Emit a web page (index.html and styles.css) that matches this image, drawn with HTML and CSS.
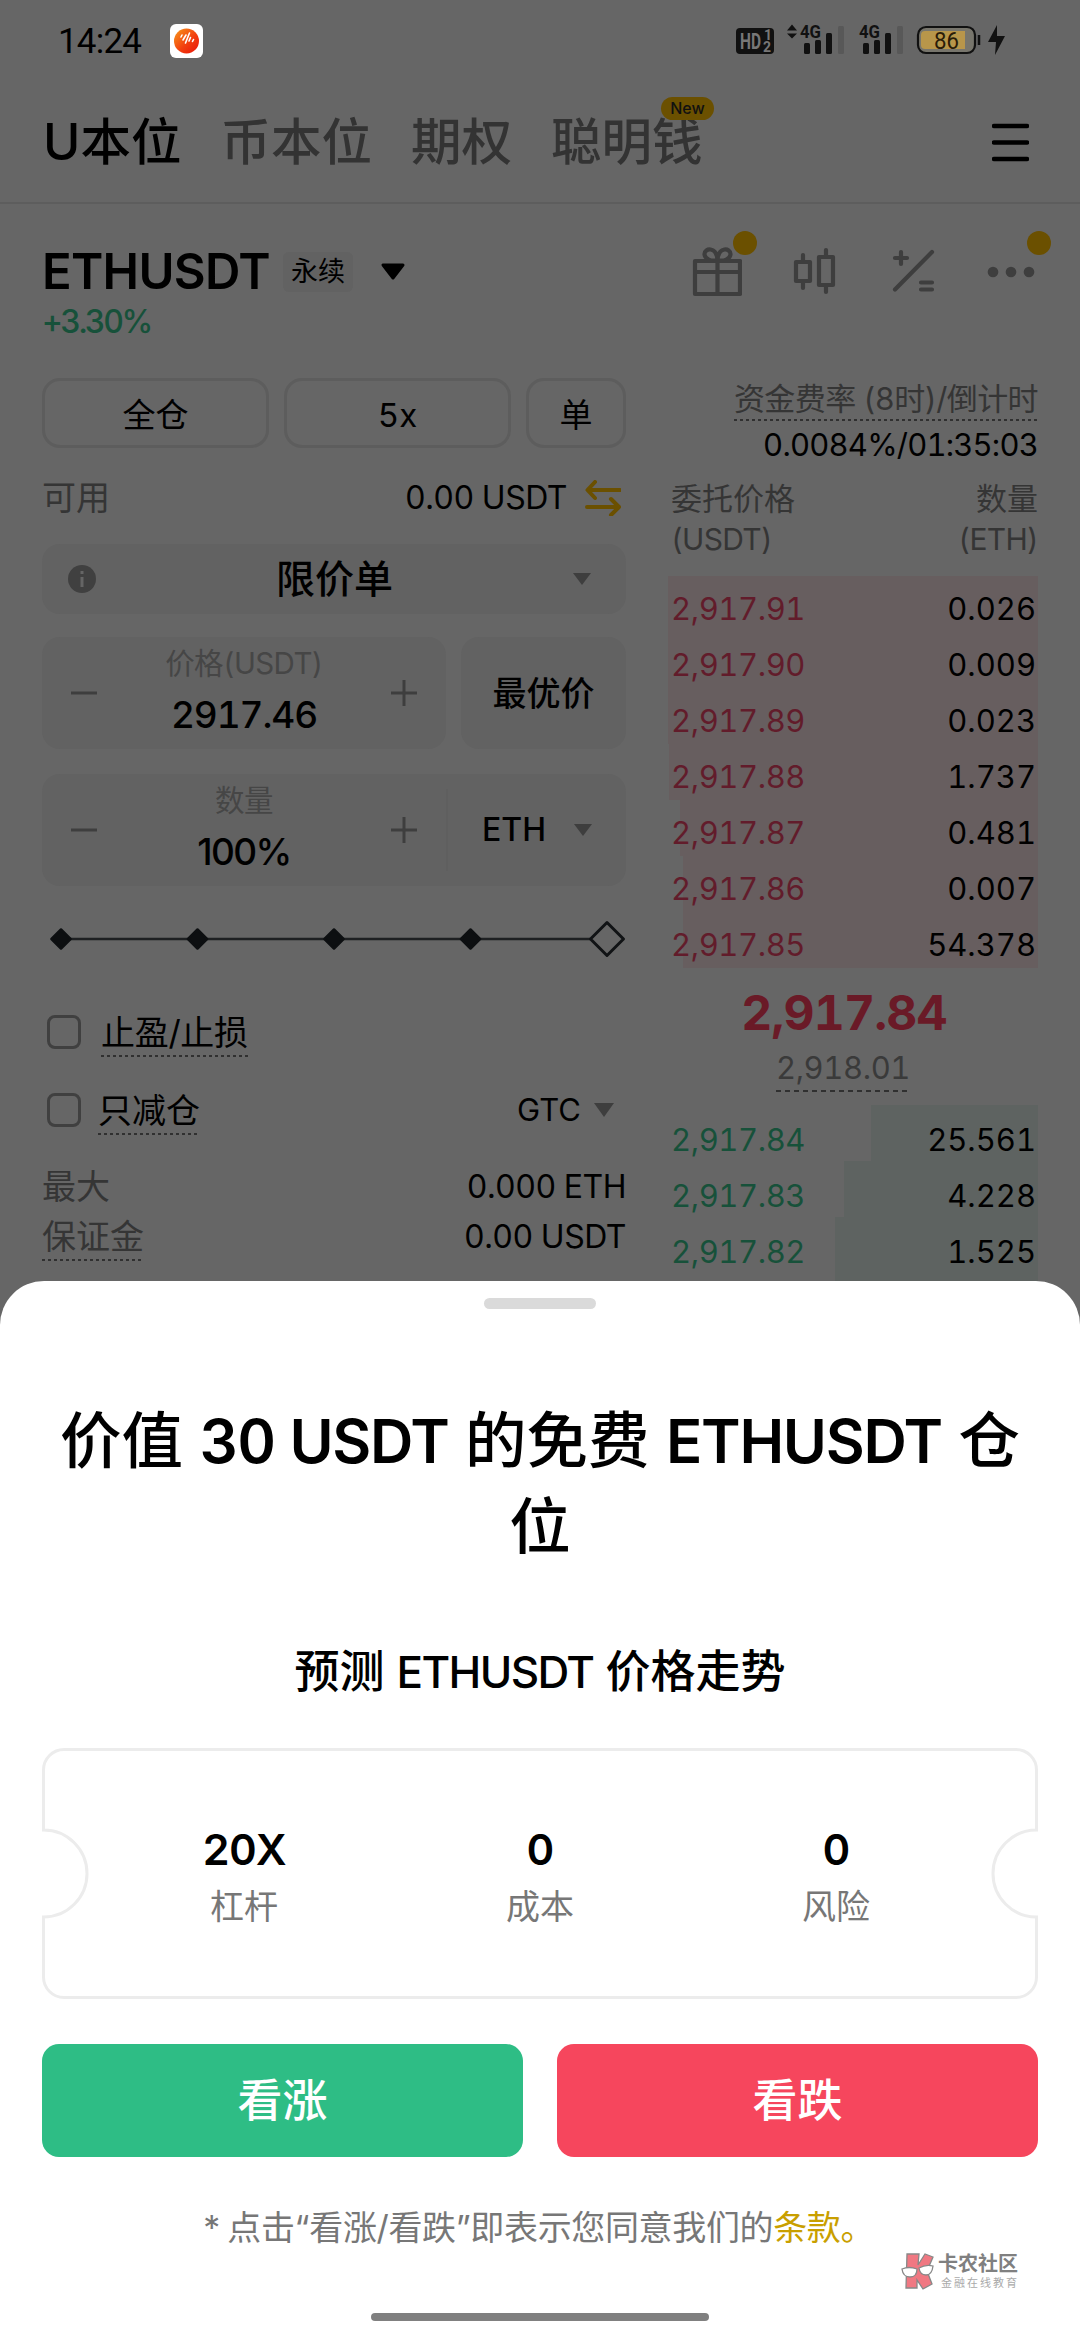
FILE: index.html
```html
<!DOCTYPE html>
<html lang="zh-CN">
<head>
    <meta charset="UTF-8">
    <meta name="viewport" content="width=device-width, initial-scale=1.0">
    <title>ETHUSDT 永续</title>
    <link rel="stylesheet" href="styles.css">
</head>
<body>
    <header class="status">
        <span class="time">14:24</span>
        <svg class="app-icon" width="33" height="34" viewBox="0 0 33 34">
            <defs>
                <linearGradient id="ball" x1="0" y1="0" x2="1" y2="1">
                    <stop offset="0" stop-color="#f79a1c"/>
                    <stop offset="0.55" stop-color="#f2400f"/>
                    <stop offset="1" stop-color="#e81208"/>
                </linearGradient>
            </defs>
            <rect width="33" height="34" rx="6" fill="#fff"/>
            <circle cx="16.5" cy="17" r="12.5" fill="url(#ball)"/>
            <path d="M11 13l1-2M13 16l3-5M15.500 19l4-10M19 17l1.500-3.500M22.500 17.500l1-2" stroke="#fff" stroke-width="1.600" stroke-linecap="round"/>
        </svg>
        <svg class="status-icons" width="272" height="36" viewBox="0 0 272 36">
            <rect x="1" y="7" width="38" height="26" rx="4" fill="#111"/>
            <text x="5" y="28" class="hd" textLength="21" lengthAdjust="spacingAndGlyphs">HD</text>
            <text x="29" y="19" class="hd-sub">1</text>
            <text x="28" y="31" class="hd-sub">2</text>
            <path d="M52 9.500l5-6 5 6zM52 12.500l5 5 5-5z" fill="#111"/>
            <text x="65" y="17" class="net" textLength="21" lengthAdjust="spacingAndGlyphs">4G</text>
            <rect x="69" y="22" width="6" height="11" rx="1.500" fill="#111"/>
            <rect x="80" y="19" width="6" height="14" rx="1.500" fill="#111"/>
            <rect x="91" y="12" width="6" height="21" rx="1.500" fill="#111"/>
            <rect x="103" y="5" width="6" height="28" rx="1.500" fill="#585858"/>
            <text x="124" y="17" class="net" textLength="21" lengthAdjust="spacingAndGlyphs">4G</text>
            <rect x="128" y="22" width="6" height="11" rx="1.500" fill="#111"/>
            <rect x="139" y="19" width="6" height="14" rx="1.500" fill="#111"/>
            <rect x="150" y="12" width="6" height="21" rx="1.500" fill="#111"/>
            <rect x="162" y="5" width="6" height="28" rx="1.500" fill="#585858"/>
            <rect x="183" y="6" width="57" height="26" rx="8" fill="#77756c" stroke="#111" stroke-width="2.200"/>
            <path d="M190 10h40v18h-40a4 4 0 0 1-4-4v-10a4 4 0 0 1 4-4z" fill="#b8964a"/>
            <path d="M244 14v10" stroke="#111" stroke-width="2.500"/>
            <text x="199" y="28" class="battery" textLength="25" lengthAdjust="spacingAndGlyphs">86</text>
            <path d="M262 4l-9 17h8l-1 13 10-19h-8z" fill="#111"/>
        </svg>
    </header>

    <nav class="tabs">
        <a class="tab active">U本位</a>
        <a class="tab">币本位</a>
        <a class="tab">期权</a>
        <a class="tab">聪明钱<span class="new">New</span></a>
        <svg class="menu" width="37" height="40" viewBox="0 0 37 40">
            <path d="M2 4h33M2 20.500h33M2 37h33" stroke="#000" stroke-width="4.500" stroke-linecap="round"/>
        </svg>
    </nav>

    <section class="symbol">
        <div class="symbol-left">
            <div class="symbol-name">
                <h1>ETHUSDT</h1>
                <span class="tag">永续</span>
                <svg width="26" height="18" viewBox="0 0 26 18"><path d="M3 2h20L13 15z" stroke="#000" stroke-width="3" stroke-linejoin="round"/></svg>
            </div>
            <div class="change">+3.30%</div>
        </div>
        <div class="tools">
            <div class="tool has-dot">
                <svg width="50" height="52" viewBox="0 0 50 52">
                    <path d="M3 15h45v33H3zM3 26h45M25.500 15v33M25.500 14c-6 2-13-1-13-6 0-6 12-8 13 6zM25.500 14c6 2 13-1 13-6 0-6-12-8-13 6z"/>
                </svg>
            </div>
            <div class="tool">
                <svg width="50" height="52" viewBox="0 0 50 52">
                    <path d="M6 16h14v19H6zM13 9v7M13 35v7M29 11h14v28H29zM36 4v7M36 39v7"/>
                </svg>
            </div>
            <div class="tool">
                <svg width="50" height="52" viewBox="0 0 50 52">
                    <path d="M7 12h12M13 6v12M44 6L7 43.500M33 36.500h11M33 43.500h11"/>
                </svg>
            </div>
            <div class="tool has-dot">
                <svg width="50" height="52" viewBox="0 0 50 52">
                    <g class="dots"><circle cx="7" cy="26" r="5.300"/><circle cx="25" cy="26" r="5.300"/><circle cx="43" cy="26" r="5.300"/></g>
                </svg>
            </div>
        </div>
    </section>

    <main class="trade">
        <section class="order">
            <div class="modes">
                <button class="mode">全仓</button>
                <button class="mode">5x</button>
                <button class="mode small">单</button>
            </div>
            <div class="row available">
                <span class="muted">可用</span>
                <span class="amount">0.00 USDT
                    <svg width="36" height="36" viewBox="0 0 36 36"><path d="M35 10H3M10 2L2.500 10l7.500 8M2 27h32M26 19l8 8-8 8"/></svg>
                </span>
            </div>
            <div class="box select">
                <svg width="28" height="28" viewBox="0 0 28 28"><circle cx="14" cy="14" r="14" fill="#404040"/><path d="M14 12v10M14 6v3" stroke="#656565" stroke-width="3"/></svg>
                <span>限价单</span>
                <i class="caret"></i>
            </div>
            <div class="inputs">
                <div class="box stepper">
                    <svg class="step" width="28" height="28" viewBox="0 0 28 28"><path d="M1 14h26"/></svg>
                    <div class="field"><label>价格(USDT)</label><b>2917.46</b></div>
                    <svg class="step" width="28" height="28" viewBox="0 0 28 28"><path d="M1 14h26M14 1v26"/></svg>
                </div>
                <div class="box best">最优价</div>
            </div>
            <div class="box quantity">
                <div class="stepper">
                    <svg class="step" width="28" height="28" viewBox="0 0 28 28"><path d="M1 14h26"/></svg>
                    <div class="field"><label>数量</label><b class="percent">100%</b></div>
                    <svg class="step" width="28" height="28" viewBox="0 0 28 28"><path d="M1 14h26M14 1v26"/></svg>
                </div>
                <div class="unit">ETH <i class="caret"></i></div>
            </div>
            <svg class="slider" width="584" height="40" viewBox="0 0 584 40">
                <path d="M19 20h529" stroke="#1e2022" stroke-width="2.500"/>
                <path d="M19 10.500l9.500 9.500-9.500 9.500L9.500 20zM155.500 10.500l9.500 9.500-9.500 9.500-9.500-9.500zM292 10.500l9.500 9.500-9.500 9.500-9.500-9.500zM428.500 10.500l9.500 9.500-9.500 9.500-9.500-9.500z" fill="#0d0f11" stroke="#0d0f11" stroke-width="2.500" stroke-linejoin="round"/>
                <path d="M565 3.500L581.500 20 565 36.500 548.500 20z" fill="#666" stroke="#111315" stroke-width="3" stroke-linejoin="round"/>
            </svg>
            <div class="check"><i class="tick"></i><span class="hint tpsl">止盈/止损</span></div>
            <div class="check reduce"><i class="tick"></i><span class="hint">只减仓</span><span class="tif">GTC <i class="caret big"></i></span></div>
            <div class="row max"><span class="muted">最大</span><span>0.000 ETH</span></div>
            <div class="row margin"><span class="hint muted">保证金</span><span>0.00 USDT</span></div>
        </section>

        <section class="book">
            <div class="funding"><span class="hint muted">资金费率 (8时)/倒计时</span></div>
            <div class="rate">0.0084%/01:35:03</div>
            <div class="book-head">
                <div>委托价格<br><span class="unit-name">(USDT)</span></div>
                <div>数量<br><span class="unit-name">(ETH)</span></div>
            </div>
            <ul class="asks">
                <li style="--depth: 370px"><span>2,917.91</span><span>0.026</span></li>
                <li style="--depth: 370px"><span>2,917.90</span><span>0.009</span></li>
                <li style="--depth: 370px"><span>2,917.89</span><span>0.023</span></li>
                <li style="--depth: 369px"><span>2,917.88</span><span>1.737</span></li>
                <li style="--depth: 358px"><span>2,917.87</span><span>0.481</span></li>
                <li style="--depth: 355px"><span>2,917.86</span><span>0.007</span></li>
                <li style="--depth: 355px"><span>2,917.85</span><span>54.378</span></li>
            </ul>
            <div class="last">2,917.84</div>
            <div class="mark"><span>2,918.01</span></div>
            <ul class="bids">
                <li style="--depth: 167px"><span>2,917.84</span><span>25.561</span></li>
                <li style="--depth: 194px"><span>2,917.83</span><span>4.228</span></li>
                <li style="--depth: 203px"><span>2,917.82</span><span>1.525</span></li>
                <li style="--depth: 203px"></li>
            </ul>
        </section>
    </main>

    <section class="sheet">
        <div class="handle"></div>
        <h2>价值 <span>30 USDT</span> 的免费 <span>ETHUSDT</span> 仓位</h2>
        <h3>预测 <span>ETHUSDT</span> 价格走势</h3>
        <div class="ticket">
            <svg class="ticket-edge" width="996" height="251" viewBox="0 0 996 251">
                <path d="M22 1.500h952a20.500 20.500 0 0 1 20.500 20.500v60a43.500 43.500 0 0 0 0 87v60a20.500 20.500 0 0 1-20.500 20.500H22A20.500 20.500 0 0 1 1.500 229v-60a43.500 43.500 0 0 0 0-87V22A20.500 20.500 0 0 1 22 1.500z" fill="#fff" stroke="#ececec" stroke-width="3"/>
            </svg>
            <div class="stat"><b>20X</b><span>杠杆</span></div>
            <div class="stat"><b>0</b><span>成本</span></div>
            <div class="stat"><b>0</b><span>风险</span></div>
        </div>
        <div class="actions">
            <button class="up">看涨</button>
            <button class="down">看跌</button>
        </div>
        <p class="terms">* 点击“看涨/看跌”即表示您同意我们的<a>条款。</a></p>
        <div class="home-bar"></div>
    </section>

    <div class="watermark">
        <svg width="36" height="38" viewBox="0 0 36 38">
            <path d="M7 2h12l-1 11 7-11 8 3-6 14 5 13-9 5-6-9v8H6z" fill="#f07882" stroke="#888" stroke-width="1.300"/>
            <path d="M2 17q7-3 15 0 0 8-7 8-7 0-8-8zM19 16q7-4 14-2-1 9-7 9-6 0-7-7z" fill="#fff" stroke="#888" stroke-width="1.300"/>
        </svg>
        <div class="watermark-text"><b>卡农社区</b><span>金融在线教育</span></div>
    </div>
</body>
</html>
```
FILE: styles.css
```css
* {
    box-sizing: border-box;
}
body {
    margin: 0;
    width: 1080px;
    height: 2340px;
    position: relative;
    overflow: hidden;
    background-color: #666;
    color: #000;
    font-family: Inter, "Noto Sans CJK SC", sans-serif;
    font-size: 32px;
    line-height: 40px;
    font-variant-numeric: tabular-nums;
    white-space: nowrap;
}
h1, h2, h3, p, ul {
    margin: 0;
    padding: 0;
    list-style: none;
}
button {
    padding: 0;
    border: 0;
    background: none;
    color: inherit;
    font: inherit;
}
svg {
    display: block;
    flex: none;
}

/* status bar */
.status {
    height: 80px;
    padding: 22px 0 0 58px;
    display: flex;
    align-items: flex-start;
}
.time {
    width: 112px;
    font: 400 35px/40px Roboto, sans-serif;
    letter-spacing: -0.8px;
}
.app-icon {
    margin-top: 2px;
}
.status-icons {
    margin: -1px 0 0 532px;
    overflow: visible;
    font-family: Roboto, sans-serif;
}
.hd {
    font-size: 22px;
    font-weight: 700;
    fill: #777;
}
.hd-sub {
    font-size: 14px;
    font-weight: 700;
    fill: #777;
}
.net {
    font-size: 19px;
    font-weight: 700;
    fill: #111;
}
.battery {
    font-size: 24px;
    font-weight: 400;
    fill: #2a1c08;
}

/* market tabs */
.tabs {
    height: 124px;
    padding: 2px 51px 0 43px;
    border-bottom: 2px solid #5d5d5d;
    display: flex;
    align-items: center;
    gap: 39px;
    font-size: 50.500px;
    font-weight: 500;
}
.tab {
    position: relative;
    color: #333;
}
.tab.active {
    color: #000;
}
.new {
    position: absolute;
    left: 110px;
    top: -25px;
    width: 53px;
    height: 23px;
    border-radius: 12px;
    background-color: #6b5000;
    color: #111;
    font-size: 16px;
    line-height: 23px;
    text-align: center;
}
.menu {
    margin-left: auto;
}

/* symbol header */
.symbol {
    height: 162px;
    padding: 42px 44px 0 42px;
    display: flex;
    justify-content: space-between;
}
.symbol-name {
    height: 52px;
    display: flex;
    align-items: center;
}
h1 {
    width: 241px;
    font-size: 49px;
    font-weight: 600;
    letter-spacing: -0.7px;
}
.tag {
    width: 70px;
    margin-right: 27px;
    border-radius: 6px;
    background-color: #626262;
    font-size: 27px;
    text-align: center;
}
.change {
    margin-top: 4px;
    color: #17513a;
    font-weight: 500;
    letter-spacing: -2.4px;
}
.tools {
    display: flex;
    gap: 48px;
}
.tool {
    position: relative;
}
.tool path {
    fill: none;
    stroke: #3e3e3e;
    stroke-width: 4.200;
    stroke-linecap: round;
    stroke-linejoin: round;
}
.dots {
    fill: #3e3e3e;
}
.has-dot::after {
    content: "";
    position: absolute;
    top: -15px;
    right: -15px;
    width: 24px;
    height: 24px;
    border-radius: 50%;
    background-color: #6b5000;
}

/* trade area */
.trade {
    padding: 0 42px;
    display: flex;
    justify-content: space-between;
}
.order {
    width: 584px;
    padding-top: 12px;
}
.modes {
    height: 70px;
    display: flex;
    gap: 15px;
}
.mode {
    flex: 1;
    padding-top: 3px;
    border: 3px solid #5d5d5d;
    border-radius: 18px;
    font-size: 33px;
}
.mode.small {
    flex: none;
    width: 100px;
}
.row {
    height: 40px;
    display: flex;
    justify-content: space-between;
    letter-spacing: -0.5px;
}
.muted {
    color: #353535;
    font-size: 34px;
    letter-spacing: 0;
}
.available {
    margin-top: 30px;
}
.amount {
    display: flex;
    gap: 18px;
    align-items: center;
    padding-right: 5px;
}
.amount path {
    fill: none;
    stroke: #6b5000;
    stroke-width: 4;
    stroke-linecap: round;
    stroke-linejoin: round;
}
.box {
    border-radius: 18px;
    background-color: #626262;
}
.select {
    height: 70px;
    margin-top: 26px;
    padding: 0 35px 0 26px;
    display: flex;
    align-items: center;
    justify-content: space-between;
    font-size: 39px;
    font-weight: 500;
}
.caret {
    width: 18px;
    height: 12px;
    background-color: #3e3e3e;
    clip-path: polygon(0 0, 100% 0, 50% 100%);
}
.caret.big {
    width: 20px;
    height: 14px;
}
.inputs {
    height: 112px;
    margin-top: 23px;
    display: flex;
    gap: 15px;
}
.stepper {
    width: 404px;
    height: 112px;
    padding: 0 28px;
    display: flex;
    align-items: center;
    justify-content: space-between;
}
.step {
    stroke: #3e3e3e;
    stroke-width: 3;
}
.field {
    display: flex;
    flex-direction: column;
    align-items: center;
}
.field label {
    height: 48px;
    color: #464646;
    font-size: 29.500px;
    line-height: 38px;
    letter-spacing: -0.6px;
}
.field b {
    height: 50px;
    font-size: 37px;
    font-weight: 500;
    line-height: 45px;
    letter-spacing: -1.1px;
}
.field .percent {
    font-variant-numeric: normal;
    letter-spacing: -1.600px;
}
.best {
    flex: 1;
    font-size: 34px;
    font-weight: 500;
    line-height: 114px;
    text-align: center;
}
.quantity {
    height: 112px;
    margin-top: 25px;
    display: flex;
    align-items: center;
}
.unit {
    flex: 1;
    height: 82px;
    padding: 0 34px 0 34px;
    border-left: 2px solid #5f5f5f;
    display: flex;
    align-items: center;
    justify-content: space-between;
    font-weight: 500;
}
.slider {
    margin-top: 33px;
}
.check {
    height: 50px;
    margin-top: 48px;
    padding-left: 5px;
    display: flex;
    align-items: center;
    font-size: 34px;
}
.check.reduce {
    margin-top: 28px;
}
.tick {
    width: 34px;
    height: 34px;
    margin-right: 17px;
    border: 3px solid #404040;
    border-radius: 8px;
}
.hint {
    display: inline-block;
    height: 50px;
    line-height: 51px;
    background: repeating-linear-gradient(to right, #303030 0 3px, transparent 3px 6px) left bottom / 100% 2px no-repeat;
}
.tpsl {
    margin-left: 3px;
    letter-spacing: -0.3px;
}
.tif {
    margin-left: auto;
    padding-right: 12px;
    display: flex;
    align-items: center;
    gap: 13px;
    font-size: 31px;
    line-height: 50px;
}
.max {
    margin-top: 31px;
    line-height: 42px;
}
.margin {
    height: 50px;
    margin-top: 5px;
    line-height: 51px;
}

/* order book */
.book {
    width: 370px;
    padding-top: 9px;
    font-size: 31px;
}
.funding {
    text-align: right;
}
.funding .hint {
    height: 46px;
    font-size: 31px;
    line-height: 47px;
    letter-spacing: -0.600px;
    vertical-align: top;
}
.rate {
    margin-top: 4px;
    text-align: right;
    letter-spacing: -0.800px;
}
.book-head {
    margin-top: 14px;
    padding-left: 3px;
    display: flex;
    justify-content: space-between;
    color: #353535;
    line-height: 40px;
}
.book-head div:last-child {
    text-align: right;
}
.unit-name {
    font-size: 30px;
    letter-spacing: -0.700px;
}
.asks {
    margin-top: 17px;
}
.asks li, .bids li {
    height: 56px;
    padding: 5px 2px 0 3px;
    display: flex;
    justify-content: space-between;
    line-height: 56px;
    background: linear-gradient(to left, var(--fill) var(--depth), transparent var(--depth));
}
.asks li {
    --fill: #675e5f;
}
.bids li {
    --fill: #5e6361;
    padding-top: 7px;
}
.asks li span:first-child {
    color: #621c2b;
    letter-spacing: -0.400px;
}
.bids li span:first-child {
    color: #17513a;
    letter-spacing: -0.400px;
}
.last {
    height: 60px;
    margin-top: 14px;
    padding-right: 18px;
    color: #6a1a27;
    font-size: 48px;
    font-weight: 700;
    line-height: 62px;
    text-align: center;
    letter-spacing: -0.800px;
}
.mark {
    height: 46px;
    margin: 4px 0 13px;
    padding-right: 20px;
    color: #3a3a3a;
    text-align: center;
    letter-spacing: -0.400px;
}
.mark span {
    display: inline-block;
    height: 46px;
    line-height: 44px;
    background: repeating-linear-gradient(to right, #303030 0 5px, transparent 5px 9px) left bottom / 100% 2px no-repeat;
}

/* bottom sheet covers the trade screen */
.sheet {
    position: absolute;
    left: 0;
    top: 1281px;
    width: 1080px;
    height: 1059px;
    padding: 17px 42px 0;
    border-radius: 44px 44px 0 0;
    background-color: #fff;
    display: flex;
    flex-direction: column;
}
.handle {
    width: 112px;
    height: 11px;
    margin: 0 auto;
    border-radius: 6px;
    background-color: #dadada;
}
h2 {
    margin-top: 89px;
    font-size: 61.500px;
    font-weight: 500;
    line-height: 85px;
    text-align: center;
    white-space: normal;
    word-break: break-all;
}
h2 span {
    font-size: 60px;
    font-weight: 600;
    letter-spacing: -1.300px;
}
h3 {
    margin-top: 73px;
    font-size: 45px;
    font-weight: 500;
    line-height: 60px;
    text-align: center;
}
h3 span {
    font-size: 44px;
    letter-spacing: -1.600px;
}
.ticket {
    position: relative;
    height: 251px;
    margin-top: 46px;
    padding: 0 54px;
    display: flex;
    align-items: center;
}
.ticket-edge {
    position: absolute;
    left: 0;
    top: 0;
}
.stat {
    position: relative;
    flex: 1;
    padding-top: 7px;
    display: flex;
    flex-direction: column;
    align-items: center;
}
.stat b {
    font-size: 43px;
    font-weight: 600;
    line-height: 60px;
    letter-spacing: -1px;
}
.stat span {
    color: #777;
    font-size: 34px;
    line-height: 56px;
}
.actions {
    margin-top: 45px;
    display: flex;
    gap: 34px;
}
.actions button {
    flex: 1;
    height: 113px;
    border-radius: 17px;
    color: #fff;
    font-size: 45px;
    font-weight: 500;
}
.actions .up {
    background-color: #2ebd85;
}
.actions .down {
    background-color: #f6465d;
}
.terms {
    margin-top: 46px;
    padding-right: 5px;
    color: #777;
    font-size: 34px;
    line-height: 50px;
    text-align: center;
    letter-spacing: -0.350px;
    word-spacing: -4px;
}
.terms a {
    color: #c99f00;
}
.home-bar {
    width: 338px;
    height: 8px;
    margin: 60px auto 0;
    border-radius: 4px;
    background-color: #808080;
}

/* community stamp over the sheet */
.watermark {
    position: absolute;
    left: 900px;
    top: 2252px;
    display: flex;
    gap: 2px;
}
.watermark-text {
    display: flex;
    flex-direction: column;
    color: #808080;
}
.watermark-text b {
    font-size: 20px;
    line-height: 24px;
    font-weight: 700;
}
.watermark-text span {
    padding-left: 3px;
    color: #aaa;
    font-size: 11px;
    letter-spacing: 2px;
    line-height: 14px;
}
```
